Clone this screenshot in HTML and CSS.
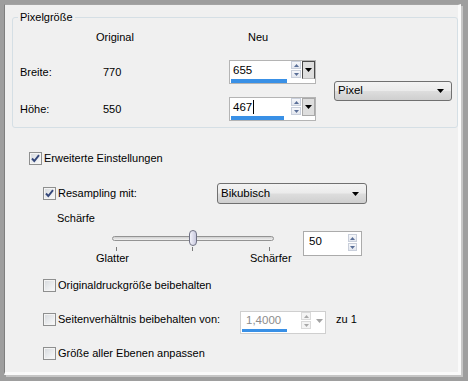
FILE: index.html
```html
<!DOCTYPE html>
<html lang="de">
<head>
<meta charset="utf-8">
<title>Bildgröße ändern</title>
<link rel="stylesheet" href="styles.css">
</head>
<body>
<div class="frame">
  <div class="panel">
    <div class="group">
      <span class="legend">Pixelgröße</span>
      <div class="head"><span>Original</span><span>Neu</span></div>
      <div class="dims">
        <span class="lbl">Breite:</span><span class="val">770</span>
        <div class="spin">
          <div class="spin-top">
            <span class="spin-text">655</span>
            <span class="arrows"><span class="arr"><svg width="5" height="3" viewBox="0 0 5 3"><polygon points="2.5,0 5,3 0,3"/></svg></span><span class="arr"><svg width="5" height="3" viewBox="0 0 5 3"><polygon points="0,0 5,0 2.5,3"/></svg></span></span>
            <span class="ddbtn focus"><svg width="7" height="4" viewBox="0 0 7 4"><polygon points="0,0 7,0 3.5,4"/></svg></span>
          </div>
          <div class="bar" style="width:56px"></div>
        </div>
        <div class="combo combo-pixel"><span>Pixel</span><svg width="7" height="4" viewBox="0 0 7 4"><polygon points="0,0 7,0 3.5,4"/></svg></div>
        <span class="lbl">Höhe:</span><span class="val">550</span>
        <div class="spin">
          <div class="spin-top">
            <span class="spin-text">467<span class="caret"></span></span>
            <span class="arrows"><span class="arr"><svg width="5" height="3" viewBox="0 0 5 3"><polygon points="2.5,0 5,3 0,3"/></svg></span><span class="arr"><svg width="5" height="3" viewBox="0 0 5 3"><polygon points="0,0 5,0 2.5,3"/></svg></span></span>
            <span class="ddbtn"><svg width="7" height="4" viewBox="0 0 7 4"><polygon points="0,0 7,0 3.5,4"/></svg></span>
          </div>
          <div class="bar" style="width:53px"></div>
        </div>
      </div>
    </div>

    <div class="adv">
      <div class="chk-row row-erw">
        <span class="chk checked"><svg width="11" height="11" viewBox="0 0 11 11"><path d="M2 5.5 L4.3 8 L9 2.2"/></svg></span>
        <span>Erweiterte Einstellungen</span>
      </div>
      <div class="row-res">
        <div class="chk-row res-label">
          <span class="chk checked"><svg width="11" height="11" viewBox="0 0 11 11"><path d="M2 5.5 L4.3 8 L9 2.2"/></svg></span>
          <span>Resampling mit:</span>
        </div>
        <div class="combo combo-bik"><span>Bikubisch</span><svg width="7" height="4" viewBox="0 0 7 4"><polygon points="0,0 7,0 3.5,4"/></svg></div>
      </div>
      <div class="schaerfe">Schärfe</div>
      <div class="slider-row">
        <div class="slider">
          <div class="track"></div>
          <div class="thumb"></div>
          <div class="ticks"><span class="tick t1"></span><span class="tick t2"></span><span class="tick t3"></span></div>
          <div class="slabels"><span>Glatter</span><span>Schärfer</span></div>
        </div>
        <div class="spin50">
          <span class="spin-text">50</span>
          <span class="arrows"><span class="arr"><svg width="5" height="3" viewBox="0 0 5 3"><polygon points="2.5,0 5,3 0,3"/></svg></span><span class="arr"><svg width="5" height="3" viewBox="0 0 5 3"><polygon points="0,0 5,0 2.5,3"/></svg></span></span>
        </div>
      </div>
      <div class="chk-row row-orig">
        <span class="chk"></span>
        <span>Originaldruckgröße beibehalten</span>
      </div>
      <div class="row-seit">
        <div class="chk-row seit-label">
          <span class="chk"></span>
          <span>Seitenverhältnis beibehalten von:</span>
        </div>
        <div class="spin spin-dis">
          <div class="spin-top">
            <span class="spin-text">1,4000</span>
            <span class="arrows"><span class="arr"><svg width="5" height="3" viewBox="0 0 5 3"><polygon points="2.5,0 5,3 0,3"/></svg></span><span class="arr"><svg width="5" height="3" viewBox="0 0 5 3"><polygon points="0,0 5,0 2.5,3"/></svg></span></span>
            <span class="ddbtn"><svg width="7" height="4" viewBox="0 0 7 4"><polygon points="0,0 7,0 3.5,4"/></svg></span>
          </div>
          <div class="bar" style="width:45px"></div>
        </div>
        <span class="zu">zu 1</span>
      </div>
      <div class="chk-row row-groesse">
        <span class="chk"></span>
        <span>Größe aller Ebenen anpassen</span>
      </div>
    </div>
  </div>
</div>
</body>
</html>
```

FILE: styles.css
```css
* { box-sizing: border-box; }
html, body { margin: 0; padding: 0; }
body {
  font-family: "Liberation Sans", Arial, sans-serif;
  font-size: 11px;
  line-height: 13px;
  color: #000;
  background: #9e9e9e;
}
.frame {
  width: 468px;
  height: 381px;
  background: #9e9e9e;
  padding: 4px 7px 6px 4px;
}
.panel {
  width: 457px;
  height: 371px;
  background: #f0f0f0;
  border-left: 1px solid #7f7f7f;
  border-top: 1px solid #a4a4a4;
  border-right: 3px solid #fafafa;
  border-bottom: 3px solid #fafafa;
  box-shadow: 2px 2px 0 #c6c6c6;
}

/* group box */
.group {
  margin: 12px 0 0 7px;
  border: 1px solid #d5dfe5;
  border-radius: 3px;
  padding-bottom: 6px;
}
.legend {
  display: block;
  width: max-content;
  margin: -7px 0 0 5px;
  padding: 0 2px;
  background: #f0f0f0;
  line-height: 13px;
}
.head {
  display: grid;
  grid-template-columns: 152px auto;
  margin-top: 7px;
  padding-left: 83px;
}
.dims {
  display: grid;
  grid-template-columns: 83px 126px 105px 118px;
  grid-template-rows: 24px 24px;
  row-gap: 13px;
  margin-top: 16px;
  padding-left: 7px;
}
.lbl, .val { align-self: center; }
.combo-pixel {
  grid-column: 4;
  grid-row: 1 / 3;
  align-self: center;
  width: 118px;
}

/* spin box */
.spin {
  width: 87px;
  height: 24px;
  border: 1px solid #b4b4b4;
  background: #fff;
  display: flex;
  flex-direction: column;
}
.spin-top {
  height: 18px;
  display: flex;
}
.spin-text {
  flex: 1;
  padding-left: 3px;
  line-height: 17px;
  font-size: 11.5px;
  display: flex;
  align-items: center;
}
.caret {
  display: inline-block;
  width: 1px;
  height: 14px;
  background: #000;
  margin-left: 1px;
}
.arrows {
  width: 10px;
  margin-right: 1px;
  display: flex;
  flex-direction: column;
  gap: 1px;
  padding-top: 0;
}
.arr {
  height: 8px;
  border: 1px solid #c9cfdb;
  background: linear-gradient(#f6f7fa, #e3e7ef);
  display: flex;
  align-items: center;
  justify-content: center;
}
.arr svg polygon { fill: #5a6f98; }
.ddbtn {
  width: 13px;
  height: 18px;
  border: 1px solid #a9a9a9;
  background: #dedede;
  display: flex;
  align-items: center;
  justify-content: center;
}
.ddbtn.focus {
  border-color: #4a4a4a;
  border-bottom-color: #bdbdbd;
}
.ddbtn svg polygon { fill: #000; }
.bar {
  height: 4px;
  margin-left: 1px;
  background: #3990e6;
}

/* disabled spin */
.spin-dis {
  width: 86px;
  height: 23px;
  border-color: #cfcfcf;
  margin-top: 1px;
}
.spin-dis .spin-top { height: 17px; }
.spin-dis .spin-text { color: #8c8c8c; padding-left: 5px; }
.spin-dis .arr { height: 8px; border-color: #dadada; background: #f4f4f4; }
.spin-dis .arr svg polygon { fill: #a8a8a8; }
.spin-dis .arrows { margin-right: 2px; }
.spin-dis .ddbtn { border: none; background: transparent; width: 12px; height: 17px; }
.spin-dis .ddbtn svg polygon { fill: #a3a3a3; }
.spin-dis .bar { height: 3px; }

/* combo */
.combo {
  height: 20px;
  border: 1px solid #707070;
  border-radius: 3px;
  background: linear-gradient(#f3f3f3 0%, #ebebeb 48%, #dddddd 52%, #cfcfcf 100%);
  display: flex;
  align-items: center;
  justify-content: space-between;
  padding: 0 7px 0 3px;
  font-size: 11.5px;
}
.combo svg polygon { fill: #000; }

/* advanced */
.adv { padding-left: 24px; }
.chk-row {
  display: flex;
  align-items: center;
  gap: 2px;
}
.chk {
  width: 13px;
  height: 13px;
  border: 1px solid #8e8f8f;
  background: linear-gradient(135deg, #d5d8dc 0%, #eceef0 60%, #fafafa 100%);
  box-shadow: inset 0 0 0 1px #f4f4f4;
  display: flex;
  align-items: center;
  justify-content: center;
  flex: none;
}
.chk svg path {
  fill: none;
  stroke: #34477a;
  stroke-width: 1.9;
}
.row-erw { margin-top: 22px; height: 17px; }
.row-res {
  display: flex;
  align-items: center;
  margin: 16px 0 0 14px;
  height: 21px;
}
.res-label { width: 174px; }
.combo-bik { width: 150px; height: 21px; }
.schaerfe { margin: 8px 0 0 28px; }
.slider-row {
  display: flex;
  margin: 5px 0 0 67px;
}
.slider {
  position: relative;
  width: 207px;
}
.track {
  margin: 6px 0 0 16px;
  width: 162px;
  height: 5px;
  border: 1px solid #939393;
  border-radius: 3px;
  background: linear-gradient(#cfcfcf, #f2f2f2);
}
.thumb {
  position: absolute;
  left: 93px;
  top: 0;
  width: 8px;
  height: 16px;
  border: 1px solid #6f7184;
  border-radius: 4px;
  background: linear-gradient(90deg, #f2f2fa, #c9c9de);
}
.ticks {
  display: flex;
  margin-top: 6px;
  height: 4px;
}
.tick { width: 1px; height: 4px; background: #7a7a7a; }
.t1 { margin-left: 20px; }
.t2 { margin-left: 75px; }
.t3 { margin-left: 76px; }
.slabels {
  display: grid;
  grid-template-columns: 154px auto;
  margin-top: 1px;
}
.spin50 {
  margin-top: 1px;
  width: 59px;
  height: 25px;
  border: 1px solid #ababab;
  background: #fff;
  display: flex;
  align-items: flex-start;
}
.spin50 .spin-text { padding: 2px 0 0 5px; line-height: 14px; }
.spin50 .arrows {
  width: 9px;
  margin: 2px 4px 0 0;
  gap: 1px;
}
.spin50 .arr { height: 8px; }

.row-orig { margin: 13px 0 0 14px; height: 15px; }
.row-seit {
  display: flex;
  align-items: flex-start;
  margin: 17px 0 0 14px;
}
.seit-label { width: 197px; margin-top: 3px; }
.zu { margin: 3px 0 0 10px; }
.row-groesse { margin: 12px 0 0 14px; height: 15px; }
```
